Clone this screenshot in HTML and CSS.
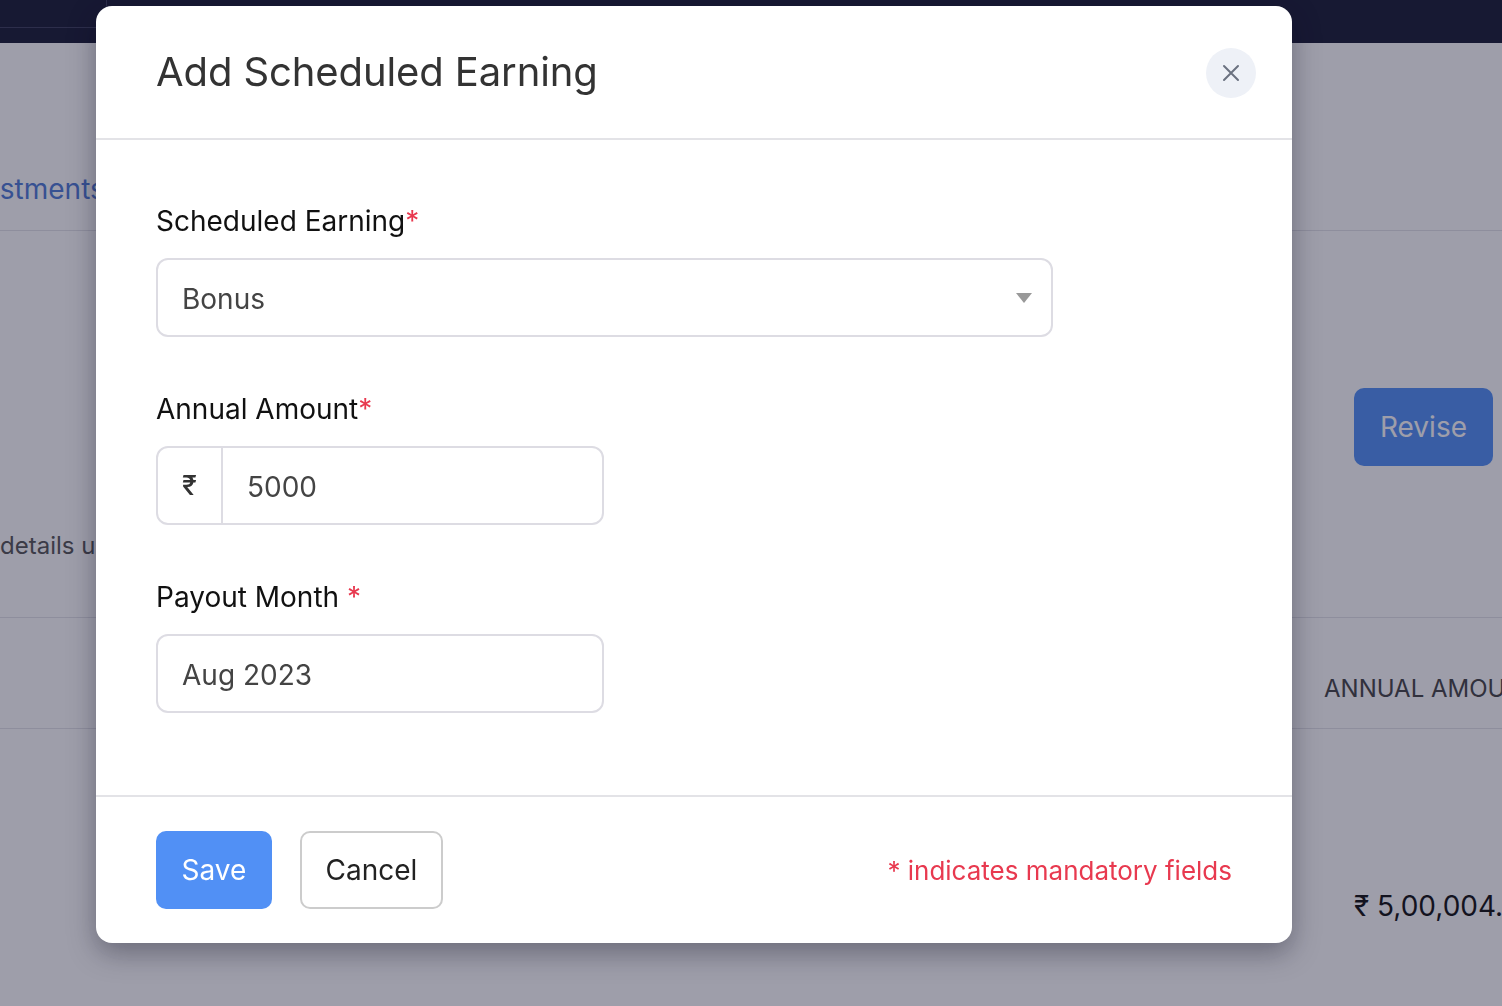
FILE: index.html
```html
<!DOCTYPE html>
<html lang="en">
<head>
    <meta charset="UTF-8">
    <meta name="viewport" content="width=device-width, initial-scale=1.0">
    <title>Add Scheduled Earning</title>
    <link rel="stylesheet" href="styles.css">
</head>
<body>
    <!-- Pagina de fondo -->
    <div class="page">
        <div class="topbar">
            <div class="topbar-item"></div>
        </div>
        <div class="page-tabs">
            <a class="tab-link">Adjustments</a>
        </div>
        <div class="page-summary">
            <p class="summary-text">details updated for this employee</p>
            <button class="btn-revise">Revise</button>
        </div>
        <div class="table-head">
            <span></span>
            <span class="th">Annual Amount</span>
        </div>
        <div class="table-row">
            <span></span>
            <span class="td">₹ 5,00,004.00</span>
        </div>
    </div>

    <div class="overlay"></div>

    <!-- Modal -->
    <div class="modal">
        <div class="modal-header">
            <h2 class="modal-title">Add Scheduled Earning</h2>
            <button class="close-btn" aria-label="Close">
                <svg width="20" height="20" viewBox="0 0 20 20">
                    <path d="M3 3 L17 17 M17 3 L3 17" stroke="#6b7280" stroke-width="2" stroke-linecap="round" fill="none"/>
                </svg>
            </button>
        </div>

        <div class="modal-body">
            <div class="field">
                <label class="field-label">Scheduled Earning<span class="req">*</span></label>
                <div class="select-box">
                    <span class="value">Bonus</span>
                    <span class="caret"></span>
                </div>
            </div>

            <div class="field">
                <label class="field-label">Annual Amount<span class="req">*</span></label>
                <div class="input-group">
                    <span class="prefix">₹</span>
                    <span class="value">5000</span>
                </div>
            </div>

            <div class="field">
                <label class="field-label">Payout Month <span class="req">*</span></label>
                <div class="input-box">
                    <span class="value">Aug 2023</span>
                </div>
            </div>
        </div>

        <div class="modal-footer">
            <button class="btn btn-save">Save</button>
            <button class="btn btn-cancel">Cancel</button>
            <span class="mandatory">* indicates mandatory fields</span>
        </div>
    </div>
</body>
</html>
```

FILE: styles.css
```css
/* Estilos generales */
body {
    font-family: Inter, "Noto Sans", sans-serif;
    margin: 0;
    padding: 0;
    overflow: hidden;
    background: white;
    height: 1006px;
}

/* Pagina de fondo */
.topbar {
    height: 43px;
    background-color: #181a33;
}

.topbar-item {
    width: 107px;
    height: 28px;
    border-right: 1px solid #3d3f5c;
    border-bottom: 1px solid #3d3f5c;
    box-sizing: border-box;
}

.page-tabs {
    height: 188px;
    display: flex;
    align-items: flex-end;
    padding-bottom: 24px;
    box-sizing: border-box;
    border-bottom: 1px solid #e3e3e8;
}

.tab-link {
    font-size: 28px;
    line-height: 34px;
    color: #4f7ad6;
    margin-left: -60px;
}

.page-summary {
    height: 386px;
    display: flex;
    justify-content: space-between;
    align-items: flex-start;
    border-bottom: 1px solid #e3e3e8;
}

.summary-text {
    margin: 300px 0 0 0;
    font-size: 24px;
    line-height: 30px;
    color: #555;
    white-space: nowrap;
}

.btn-revise {
    margin: 157px 9px 0 0;
    width: 139px;
    height: 78px;
    border: none;
    border-radius: 10px;
    background-color: #5190f5;
    color: white;
    font-family: inherit;
    font-size: 28px;
}

.table-head {
    height: 111px;
    display: grid;
    grid-template-columns: 1fr 178px;
    align-items: end;
    padding-bottom: 24px;
    box-sizing: border-box;
    border-bottom: 1px solid #e3e3e8;
}

.th {
    font-size: 24px;
    line-height: 30px;
    text-transform: uppercase;
    color: #444;
    white-space: nowrap;
    overflow: hidden;
}

.table-row {
    display: grid;
    grid-template-columns: 1fr 148px;
    padding-top: 160px;
}

.td {
    font-size: 28px;
    line-height: 34px;
    color: #111;
    white-space: nowrap;
    overflow: hidden;
}

.overlay {
    position: fixed;
    inset: 0;
    background: rgba(24, 24, 52, 0.42);
}

/* Modal */
.modal {
    position: fixed;
    left: 96px;
    top: 6px;
    width: 1196px;
    height: 937px;
    background: white;
    border-radius: 16px;
    box-shadow: 0 10px 28px rgba(10, 10, 30, 0.35);
    display: flex;
    flex-direction: column;
}

.modal-header {
    height: 134px;
    display: flex;
    align-items: center;
    justify-content: space-between;
    padding: 0 36px 2px 60px;
    box-sizing: border-box;
    border-bottom: 2px solid #e3e3e7;
}

.modal-title {
    margin: 0;
    font-size: 40px;
    font-weight: 400;
    color: #333;
    letter-spacing: -0.1px;
}

.close-btn {
    width: 50px;
    height: 50px;
    border-radius: 50%;
    border: none;
    background-color: #eef1f7;
    display: flex;
    align-items: center;
    justify-content: center;
    padding: 0;
    margin-top: 4px;
}

.modal-body {
    flex: 1;
    padding: 64px 60px 0 60px;
    display: flex;
    flex-direction: column;
    gap: 55px;
}

.field {
    display: flex;
    flex-direction: column;
    gap: 20px;
}

.field-label {
    font-size: 28px;
    line-height: 34px;
    color: #111;
}

.req {
    color: #e8394f;
}

.select-box, .input-group, .input-box {
    height: 79px;
    border: 2px solid #dddce3;
    border-radius: 12px;
    box-sizing: border-box;
    display: flex;
    align-items: center;
    font-size: 28px;
    color: #444;
}

.value {
    padding-top: 3px;
}

.select-box {
    width: 897px;
    justify-content: space-between;
    padding: 0 19px 0 24px;
}

.caret {
    width: 0;
    height: 0;
    border-left: 8px solid transparent;
    border-right: 8px solid transparent;
    border-top: 10px solid #999;
}

.input-group, .input-box {
    width: 448px;
}

.input-box {
    padding-left: 24px;
}

.prefix {
    width: 63px;
    height: 100%;
    display: flex;
    align-items: center;
    justify-content: center;
    border-right: 2px solid #dddce3;
    color: #333;
    font-size: 27px;
    font-weight: 500;
}

.input-group .value {
    padding-left: 24px;
}

/* Pie del modal */
.modal-footer {
    height: 148px;
    border-top: 2px solid #e3e3e7;
    box-sizing: border-box;
    display: flex;
    align-items: center;
    gap: 28px;
    padding: 0 60px 0 60px;
}

.btn {
    height: 78px;
    border-radius: 10px;
    font-family: inherit;
    font-size: 28px;
    padding: 0;
}

.btn-save {
    width: 116px;
    border: none;
    background-color: #5190f5;
    color: white;
}

.btn-cancel {
    width: 143px;
    border: 2px solid #cccccc;
    background: white;
    color: #222;
}

.mandatory {
    margin-left: auto;
    font-size: 26px;
    color: #e8394f;
}
```
